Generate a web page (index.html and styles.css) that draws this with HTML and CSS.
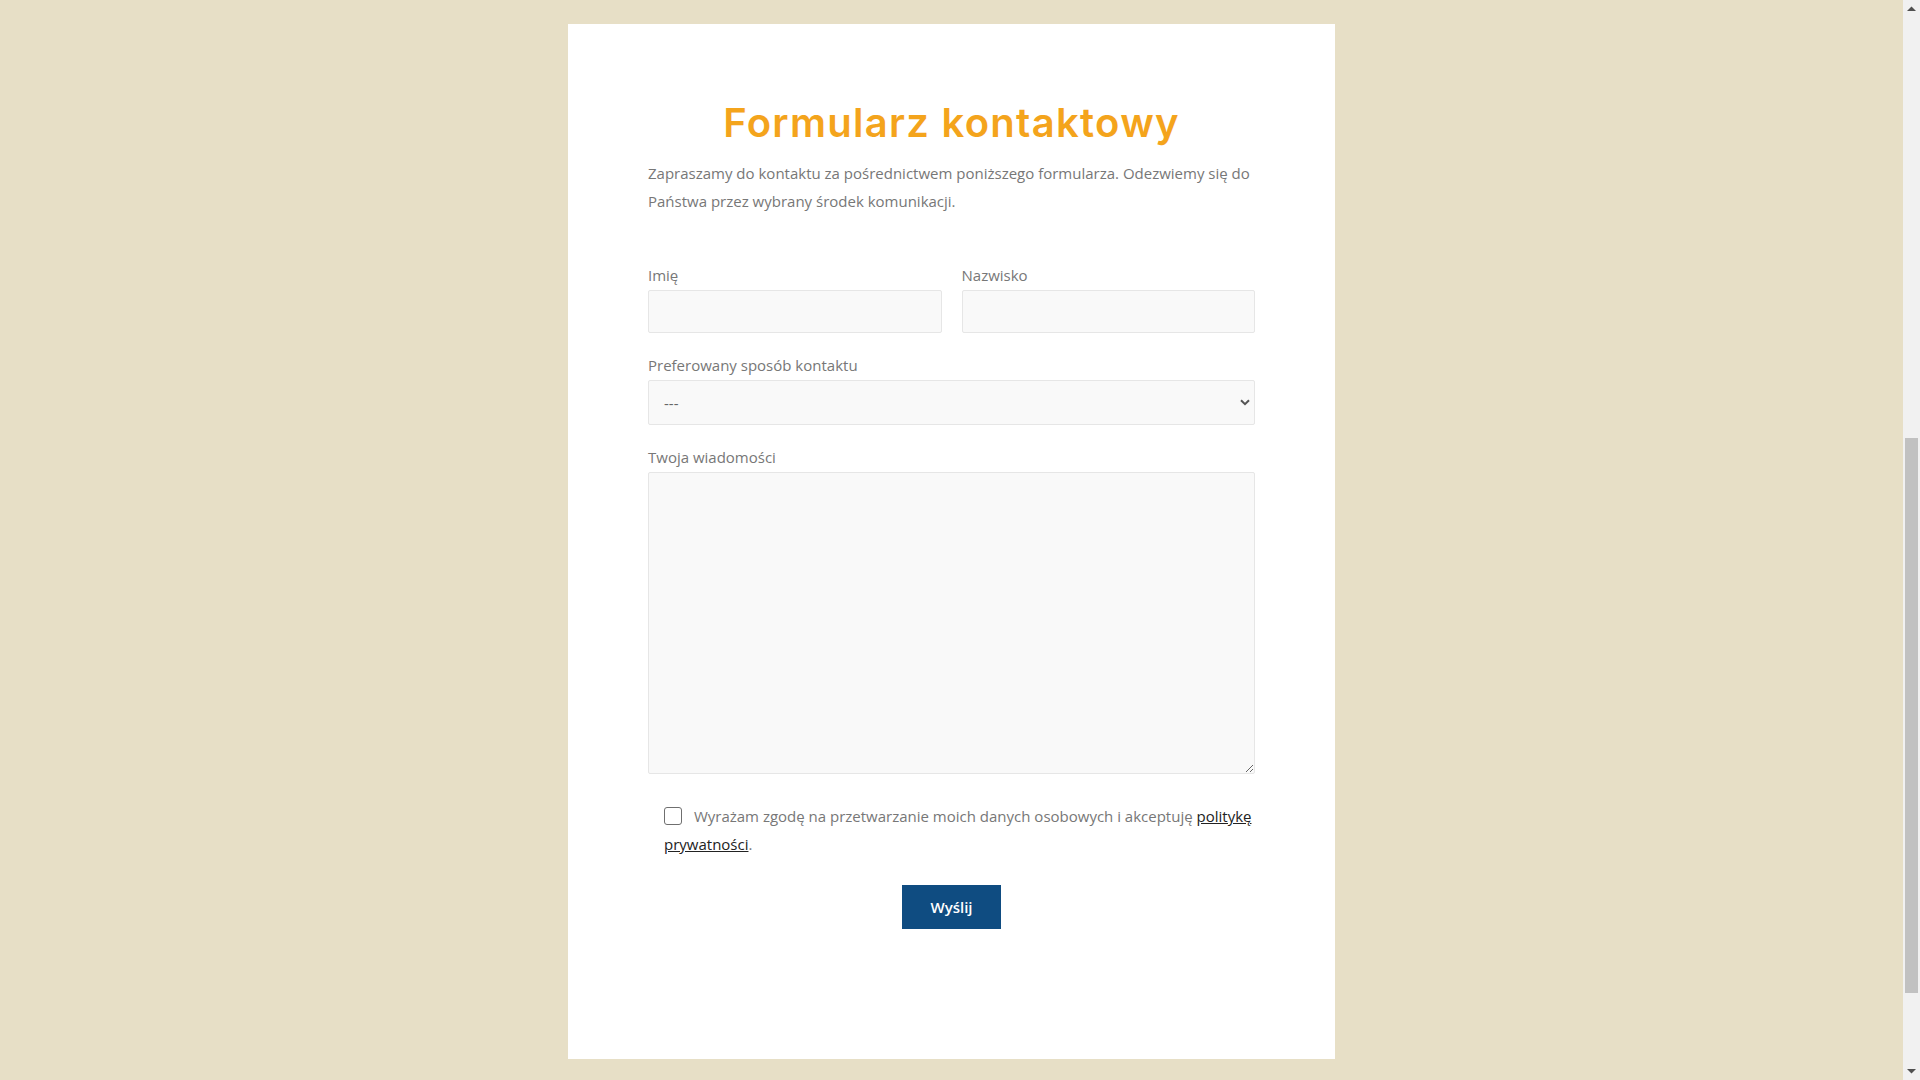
FILE: index.html
```html
<!DOCTYPE html>
<html lang="pl">
<head>
<meta charset="utf-8">
<title>Formularz kontaktowy</title>
<link rel="stylesheet" href="styles.css">
</head>
<body>
<div class="viewport">
  <main class="card">
    <h1 class="title">Formularz kontaktowy</h1>
    <p class="intro">Zapraszamy do kontaktu za pośrednictwem poniższego formularza. Odezwiemy się do Państwa przez wybrany środek komunikacji.</p>
    <form class="form">
      <div class="row">
        <div class="group">
          <label class="label" for="imie">Imię</label>
          <input class="field" id="imie" type="text">
        </div>
        <div class="group">
          <label class="label" for="nazwisko">Nazwisko</label>
          <input class="field" id="nazwisko" type="text">
        </div>
      </div>
      <div class="group">
        <label class="label" for="sposob">Preferowany sposób kontaktu</label>
        <div class="select-wrap">
          <select class="field select" id="sposob"><option>---</option></select>
          <svg class="chevron" width="10" height="7" viewBox="0 0 10 7"><path d="M1 1.2 L5 5.2 L9 1.2" fill="none" stroke="#555" stroke-width="2"/></svg>
        </div>
      </div>
      <div class="group">
        <label class="label" for="wiad">Twoja wiadomości</label>
        <textarea class="field area" id="wiad"></textarea>
      </div>
      <p class="consent"><input class="check" type="checkbox"> Wyrażam zgodę na przetwarzanie moich danych osobowych i akceptuję <a href="#" class="link">politykę prywatności</a>.</p>
      <div class="actions"><button class="btn" type="button">Wyślij</button></div>
    </form>
  </main>
</div>
<div class="scrollbar" aria-hidden="true">
  <svg class="sb-arrow sb-up" width="9" height="5" viewBox="0 0 9 5"><path d="M0 5 L4.5 0.5 L9 5 Z" fill="#505050"/></svg>
  <div class="sb-track"><div class="sb-thumb"></div></div>
  <svg class="sb-arrow sb-down" width="9" height="5" viewBox="0 0 9 5"><path d="M0 0 L4.5 4.5 L9 0 Z" fill="#505050"/></svg>
</div>
</body>
</html>
```
FILE: styles.css
```css
html, body { margin: 0; padding: 0; }
body {
  background: #e7dfc6;
  font-family: "Open Sans", "Liberation Sans", sans-serif;
  font-size: 15px;
  color: #777;
  overflow: hidden;
}
.viewport {
  height: 1080px;
  padding: 24px 17px 0 0;
  box-sizing: border-box;
}
.card {
  width: 767px;
  box-sizing: border-box;
  margin: 0 auto;
  background: #fff;
  padding: 75px 80px 130px;
}
.title {
  margin: 0 0 12px;
  text-align: center;
  font-family: "Inter", "Liberation Sans", sans-serif;
  font-weight: 600;
  font-size: 40px;
  line-height: 48px;
  color: #f4a41c;
  letter-spacing: 1.3px;
}
.intro {
  margin: 0 0 46px;
  line-height: 28px;
}
.form { margin: 0; }
.row { display: flex; gap: 20px; }
.row .group { flex: 1; }
.group { margin-bottom: 18px; }
.label {
  display: block;
  line-height: 28px;
  margin-bottom: 1px;
}
.field {
  display: block;
  width: 100%;
  box-sizing: border-box;
  height: 43px;
  background: #f9f9f9;
  border: 1px solid #e6e6e6;
  border-radius: 2px;
  font-family: inherit;
  font-size: 15px;
  color: #777;
  padding: 0 15px;
  outline: none;
}
.select-wrap { position: relative; }
.select {
  height: 45px;
  appearance: none;
  -webkit-appearance: none;
  color: #666;
}
.chevron { position: absolute; right: 5px; top: 19px; }
.area {
  height: 302px;
  padding: 10px 15px;
  resize: vertical;
}
.consent {
  margin: 28px 0 27px;
  padding-left: 16px;
  line-height: 28px;
}
.check {
  appearance: none;
  -webkit-appearance: none;
  width: 18px;
  height: 18px;
  margin: 0 8px 0 0;
  border: 1px solid #6f6f6f;
  border-radius: 3px;
  background: #fff;
  vertical-align: -3px;
}
.link { color: #222; text-decoration: underline; }
.actions { text-align: center; }
.btn {
  width: 99px;
  height: 44px;
  border: 0;
  border-radius: 0;
  background: #0f4c81;
  color: #fff;
  font-family: "Open Sans", "Liberation Sans", sans-serif;
  font-size: 15px;
  font-weight: 600;
  cursor: pointer;
}
.scrollbar {
  position: fixed;
  top: 0;
  right: 0;
  width: 17px;
  height: 1080px;
  background: #f1f1f1;
  display: flex;
  flex-direction: column;
  align-items: center;
}
.sb-arrow { flex: none; margin: 6px 0; }
.sb-track {
  flex: 1;
  width: 100%;
  position: relative;
}
.sb-thumb {
  position: absolute;
  left: 2px;
  right: 2px;
  top: 421px;
  height: 555px;
  background: #c1c1c1;
}
```
